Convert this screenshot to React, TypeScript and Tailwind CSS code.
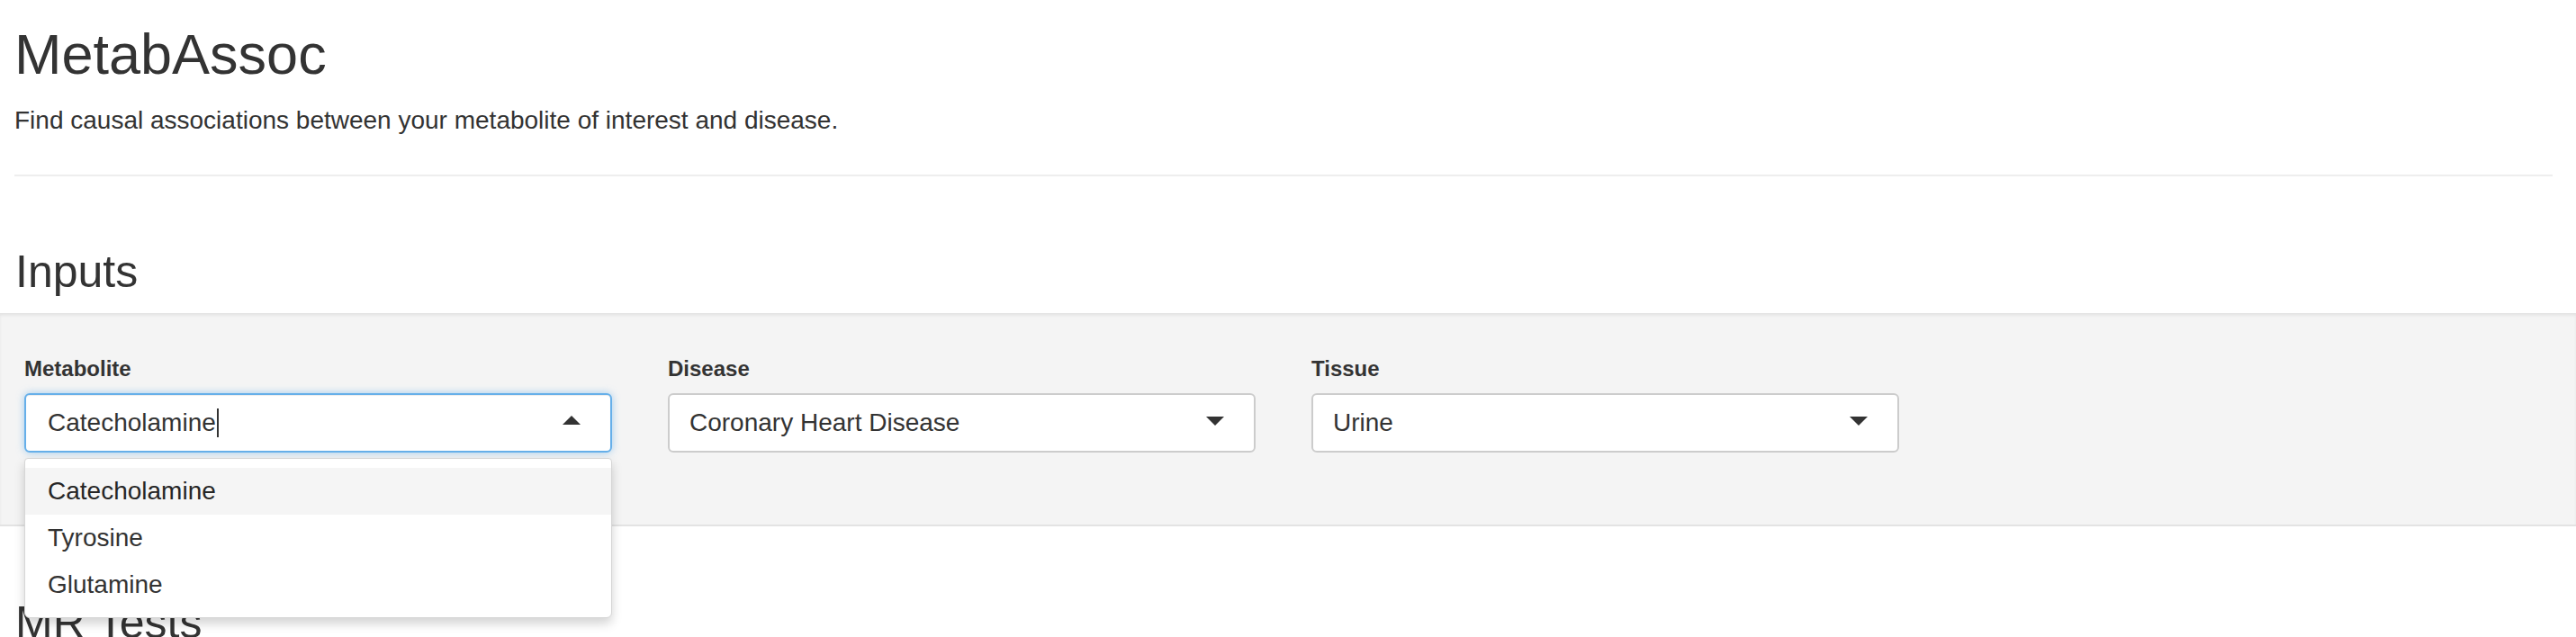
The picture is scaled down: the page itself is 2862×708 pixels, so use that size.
import React from "react";

const font = { fontFamily: '"Liberation Sans", Arial, Helvetica, sans-serif' };

function CaretDown() {
  return <span className="block h-0 w-0 border-l-[10px] border-r-[10px] border-t-[10px] border-l-transparent border-r-transparent border-t-[#333333]" />;
}
function CaretUp() {
  return <span className="block h-0 w-0 border-l-[10px] border-r-[10px] border-b-[10px] border-l-transparent border-r-transparent border-b-[#333333]" />;
}

function Label({ children }: { children: React.ReactNode }) {
  return <div className="text-[24px] leading-[32px] font-bold text-[#333333]">{children}</div>;
}

function ClosedSelect({ label, value }: { label: string; value: string }) {
  return (
    <div className="w-[653px] shrink-0">
      <Label>{label}</Label>
      <div className="mt-[11px] flex h-[66px] items-center justify-between rounded-[6px] border-2 border-[#cccccc] bg-white pl-[22px] pr-[33px]">
        <span className="text-[28px] leading-[32px] text-[#333333]">{value}</span>
        <span className="mt-[-4px]"><CaretDown /></span>
      </div>
    </div>
  );
}

export default function App() {
  const options = ["Catecholamine", "Tyrosine", "Glutamine"];
  return (
    <div className="min-h-[708px] w-full overflow-hidden bg-white text-[#333333]" style={font}>
      <div className="pl-[14px] pr-[26px]">
        <h1 className="mt-[26px] pl-[2px] text-[63px] leading-[68px] font-normal">MetabAssoc</h1>
        <p className="mt-[20px] pl-[2px] text-[28px] leading-[40px]">Find causal associations between your metabolite of interest and disease.</p>
        <hr className="ml-[2px] mt-[40px] border-0 border-t-2 border-[#eeeeee]" />
        <h2 className="mt-[79px] pl-[3px] text-[50px] leading-[55px] font-normal">Inputs</h2>
      </div>

      <div className="mt-[18px] border-t border-b-2 border-[#e3e3e3] bg-[#f4f4f4] px-[27px] pt-[45px] pb-[80px] shadow-[inset_0_2px_3px_rgba(0,0,0,0.06)]">
        <div className="flex gap-[62px]">
          <div className="w-[653px] shrink-0">
            <Label>Metabolite</Label>
            <div className="relative mt-[11px]">
              <div className="flex h-[66px] items-center justify-between rounded-[6px] border-2 border-[#66afe9] bg-white pl-[24px] pr-[33px] shadow-[inset_0_1px_1px_rgba(0,0,0,0.075),0_0_8px_rgba(102,175,233,0.6)]">
                <span className="flex items-center text-[28px] leading-[32px] text-[#333333]">
                  Catecholamine
                  <span className="ml-[1px] inline-block h-[32px] w-[2px] bg-[#333333]" />
                </span>
                <span className="mt-[-6px]"><CaretUp /></span>
              </div>
              <div className="absolute left-0 top-[72px] z-10 w-full rounded-b-[6px] rounded-t-[4px] border border-[#d6d6d6] bg-white pt-[10px] pb-[10px] shadow-[0_6px_12px_rgba(0,0,0,0.175)]">
                {options.map((o, i) => (
                  <div
                    key={o}
                    className={
                      i === 0
                        ? "flex h-[52px] items-center bg-[#f5f5f5] pl-[25px] text-[28px] text-[#262626]"
                        : "flex h-[52px] items-center pl-[25px] text-[28px] text-[#333333]"
                    }
                  >
                    {o}
                  </div>
                ))}
              </div>
            </div>
          </div>
          <ClosedSelect label="Disease" value="Coronary Heart Disease" />
          <ClosedSelect label="Tissue" value="Urine" />
        </div>
      </div>

      <div className="pl-[14px]">
        <h2 className="mt-[80px] pl-[3px] text-[50px] leading-[55px] font-normal">MR Tests</h2>
      </div>
    </div>
  );
}
